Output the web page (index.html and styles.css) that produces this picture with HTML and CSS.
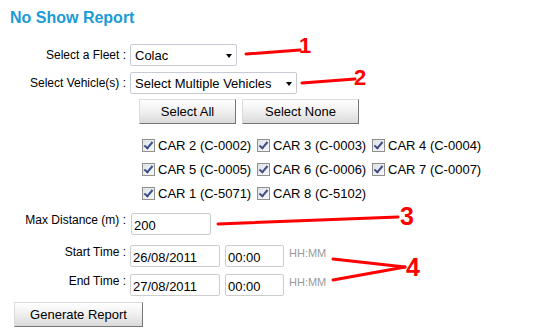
FILE: index.html
```html
<!DOCTYPE html>
<html lang="en">

<head>
    <meta charset="UTF-8">
    <title>No Show Report</title>
    <link rel="stylesheet" href="styles.css">
</head>

<body>
    <h1 class="title">No Show Report</h1>

    <div class="row">
        <label class="field-label">Select a Fleet :</label>
        <span class="select-wrap">
            <select class="fleet-select">
                <option>Colac</option>
            </select>
        </span>
    </div>

    <div class="row">
        <label class="field-label">Select Vehicle(s) :</label>
        <span class="select-wrap">
            <select class="vehicle-select">
                <option>Select Multiple Vehicles</option>
            </select>
        </span>
    </div>

    <div class="select-buttons">
        <button class="btn btn-all">Select All</button>
        <button class="btn btn-none">Select None</button>
    </div>

    <div class="cars">
        <label class="car"><input type="checkbox" checked>CAR 2 (C-0002)</label>
        <label class="car"><input type="checkbox" checked>CAR 3 (C-0003)</label>
        <label class="car"><input type="checkbox" checked>CAR 4 (C-0004)</label>
        <label class="car"><input type="checkbox" checked>CAR 5 (C-0005)</label>
        <label class="car"><input type="checkbox" checked>CAR 6 (C-0006)</label>
        <label class="car"><input type="checkbox" checked>CAR 7 (C-0007)</label>
        <label class="car"><input type="checkbox" checked>CAR 1 (C-5071)</label>
        <label class="car"><input type="checkbox" checked>CAR 8 (C-5102)</label>
    </div>

    <div class="row row-top row-distance">
        <label class="field-label">Max Distance (m) :</label>
        <input type="text" class="text-input distance-input" value="200">
    </div>

    <div class="row row-top row-start">
        <label class="field-label">Start Time :</label>
        <input type="text" class="text-input date-input" value="26/08/2011">
        <input type="text" class="text-input time-input" value="00:00">
        <span class="hint">HH:MM</span>
    </div>

    <div class="row row-top row-end">
        <label class="field-label">End Time :</label>
        <input type="text" class="text-input date-input" value="27/08/2011">
        <input type="text" class="text-input time-input" value="00:00">
        <span class="hint">HH:MM</span>
    </div>

    <button class="btn btn-generate">Generate Report</button>

    <!-- red callouts drawn over the form -->
    <svg class="callouts" width="541" height="336" viewBox="0 0 541 336">
        <g stroke="#f00" stroke-width="3" stroke-linecap="round" fill="none">
            <line x1="246" y1="54" x2="300" y2="50" />
            <line x1="302" y1="83" x2="355" y2="79" />
            <line x1="218" y1="224" x2="398" y2="217" />
            <line x1="333" y1="259" x2="405" y2="267" />
            <line x1="333" y1="280" x2="405" y2="267" />
        </g>
        <g class="callout-num" fill="#f00">
            <text x="299" y="53" font-size="22">1</text>
            <text x="354" y="85" font-size="22">2</text>
            <text x="400" y="225" font-size="25">3</text>
            <text x="406" y="276" font-size="25">4</text>
        </g>
    </svg>
</body>

</html>
```

FILE: styles.css
```css
body {
    margin: 0;
    padding: 9px 0 0 10px;
    font-family: "Liberation Sans", Arial, sans-serif;
    color: #000;
    background: #fff;
    position: relative;
    width: 531px;
    height: 327px;
}

.title {
    margin: 0 0 17px;
    font-size: 16px;
    line-height: 18px;
    font-weight: bold;
    color: #1b9bd7;
}

.row {
    display: flex;
    align-items: center;
    height: 22px;
    margin-bottom: 6px;
}

.row-top {
    align-items: flex-start;
}

.field-label {
    width: 116px;
    margin-right: 4px;
    text-align: right;
    font-size: 12px;
    line-height: 14px;
}

.row-top .field-label {
    margin-top: 0;
}

.row-distance {
    margin-bottom: 10px;
}

.row-start {
    margin-bottom: 7px;
}

.row-end {
    margin-bottom: 6px;
}

.row-distance .field-label {
    margin-right: 5px;
}

.select-wrap {
    position: relative;
    display: inline-block;
}

.select-wrap::after {
    content: "";
    position: absolute;
    right: 5px;
    top: 10px;
    border-left: 3.5px solid transparent;
    border-right: 3.5px solid transparent;
    border-top: 4px solid #000;
    pointer-events: none;
}

.select-wrap select {
    -webkit-appearance: none;
    appearance: none;
    box-sizing: border-box;
    height: 22px;
    padding: 0 0 0 4px;
    border: 1px solid #c7ccd4;
    border-radius: 2px;
    background: #fff;
    font-family: "Liberation Sans", Arial, sans-serif;
    font-size: 13px;
    color: #000;
}

.fleet-select {
    width: 107px;
}

.vehicle-select {
    width: 167px;
}

.row:nth-of-type(2) {
    margin-bottom: 5px;
}

.select-buttons {
    display: flex;
    gap: 6px;
    margin: 0 0 9px 129px;
}

.btn {
    box-sizing: border-box;
    height: 25px;
    padding: 0;
    border: 1px solid;
    border-color: #dcdcdc #767676 #767676 #dcdcdc;
    background: linear-gradient(#ffffff, #f1f1f1 45%, #dadada);
    font-family: "Liberation Sans", Arial, sans-serif;
    font-size: 13px;
    color: #000;
}

.btn-all {
    width: 97px;
}

.btn-none {
    width: 117px;
}

.btn-generate {
    width: 129px;
    margin-left: 4px;
}

.cars {
    display: grid;
    grid-template-columns: repeat(3, 115px);
    grid-auto-rows: 24px;
    margin: 0 0 8px 132px;
}

.car {
    display: flex;
    align-items: center;
    font-size: 13px;
    white-space: nowrap;
}

.car input {
    -webkit-appearance: none;
    appearance: none;
    position: relative;
    box-sizing: border-box;
    width: 13px;
    height: 13px;
    margin: 0 3px 0 0;
    border: 1px solid #8e8f8f;
    background: linear-gradient(135deg, #dfe2e8, #f6f7f9);
}

.car input::after {
    content: "";
    position: absolute;
    left: 3px;
    top: 0px;
    width: 3px;
    height: 7px;
    border: solid #3d4f86;
    border-width: 0 2px 2px 0;
    transform: rotate(40deg);
}

.text-input {
    box-sizing: border-box;
    height: 22px;
    padding: 2px 2px 0;
    border: 1px solid #cdcdcd;
    border-radius: 2px;
    font-family: "Liberation Sans", Arial, sans-serif;
    font-size: 13px;
    color: #000;
}

.distance-input {
    width: 80px;
}

.date-input {
    width: 90px;
    margin-right: 5px;
}

.time-input {
    width: 59px;
    margin-right: 5px;
}

.hint {
    font-size: 11px;
    line-height: 16px;
    color: #9a9a9a;
}

.callouts {
    position: absolute;
    top: 0;
    left: 0;
    pointer-events: none;
}

.callout-num {
    font-family: "Liberation Sans", Arial, sans-serif;
    font-weight: bold;
}
```
